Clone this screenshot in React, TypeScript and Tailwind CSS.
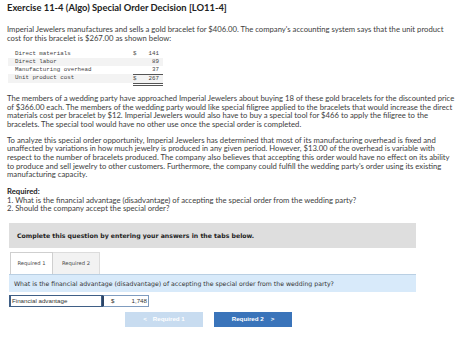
import React from "react";

const body = "font-['Lato','Liberation_Sans',sans-serif]";
const verdana = "font-['DejaVu_Sans','Liberation_Sans',sans-serif]";

const costRows = [
  { label: "Direct materials", sign: "$", value: "141", shade: false },
  { label: "Direct labor", sign: "", value: "89", shade: true },
  { label: "Manufacturing overhead", sign: "", value: "37", shade: false },
];

const Lines = ({ lines }: { lines: string[] }) => (
  <>
    {lines.map((l, i) => (
      <span key={i} className="block whitespace-nowrap">
        {l}
      </span>
    ))}
  </>
);

export default function App() {
  return (
    <div className={`w-[474px] h-[339px] overflow-hidden bg-white pl-[7px] text-[#3d3d3d] ${body}`}>
      <h1 className="pt-[2px] text-[9.4px] font-bold leading-[12px] text-[#222]">
        Exercise 11-4 (Algo) Special Order Decision [LO11-4]
      </h1>

      <p className="mt-[10.6px] text-[7.7px] leading-[9.3px]">
        <Lines
          lines={[
            "Imperial Jewelers manufactures and sells a gold bracelet for $406.00. The company's accounting system says that the unit product",
            "cost for this bracelet is $267.00 as shown below:",
          ]}
        />
      </p>

      <div className="mt-[6.8px] ml-[1px] w-[155px] font-['Liberation_Mono',monospace] text-[5.8px] text-[#444]">
        {costRows.map((r) => (
          <div
            key={r.label}
            className={`flex h-[8px] items-center ${r.shade ? "bg-[#f3f3f3]" : ""}`}
          >
            <span className="flex-1 pl-[7px]">{r.label}</span>
            <span className="flex w-[30px] justify-between pr-[4px]">
              <span>{r.sign}</span>
              <span>{r.value}</span>
            </span>
          </div>
        ))}
        <div className="flex h-[9px] items-stretch bg-[#f3f3f3]">
          <span className="flex flex-1 items-center pl-[7px]">Unit product cost</span>
          <span className="flex w-[30px] items-center justify-between border-t border-[#555] pr-[4px]">
            <span>$</span>
            <span>267</span>
          </span>
        </div>
        <div className="ml-auto h-[3px] w-[30px] border-b-[3px] border-double border-[#555]" />
      </div>

      <p className="mt-[7.9px] text-[7.7px] leading-[8.8px]">
        <Lines
          lines={[
            "The members of a wedding party have approached Imperial Jewelers about buying 18 of these gold bracelets for the discounted price",
            "of $366.00 each. The members of the wedding party would like special filigree applied to the bracelets that would increase the direct",
            "materials cost per bracelet by $12. Imperial Jewelers would also have to buy a special tool for $466 to apply the filigree to the",
            "bracelets. The special tool would have no other use once the special order is completed.",
          ]}
        />
      </p>

      <p className="mt-[6.5px] text-[7.7px] leading-[8.7px]">
        <Lines
          lines={[
            "To analyze this special order opportunity, Imperial Jewelers has determined that most of its manufacturing overhead is fixed and",
            "unaffected by variations in how much jewelry is produced in any given period. However, $13.00 of the overhead is variable with",
            "respect to the number of bracelets produced. The company also believes that accepting this order would have no effect on its ability",
            "to produce and sell jewelry to other customers. Furthermore, the company could fulfill the wedding party's order using its existing",
            "manufacturing capacity.",
          ]}
        />
      </p>

      <div className="mt-[7.9px] text-[7.7px] leading-[8.7px]">
        <div className="font-bold text-[#222]">Required:</div>
        <div>1. What is the financial advantage (disadvantage) of accepting the special order from the wedding party?</div>
        <div>2. Should the company accept the special order?</div>
      </div>

      <div className={`mt-[9.6px] ml-[2px] flex h-[25.6px] w-[407px] items-center bg-[#dedede] pl-[8px] text-[6.2px] font-bold text-[#222] ${verdana}`}>
        Complete this question by entering your answers in the tabs below.
      </div>

      <div className={`ml-[2px] w-[407px] ${verdana}`}>
        <div className="mt-[3.7px] flex h-[22px] pl-[1px] text-[5.2px] text-[#444]">
          <div className="flex w-[43px] items-center justify-center border border-b-0 border-[#cfcfcf] bg-white">
            Required 1
          </div>
          <div className="flex w-[47px] items-center justify-center border border-l-0 border-b-0 border-[#dcdcdc] bg-[#f2f2f2]">
            Required 2
          </div>
        </div>
        <div className="flex h-[18px] items-center border-t border-[#b9cfe3] bg-[#d8eafa] pl-[5px] text-[6.2px] text-[#333]">
          What is the financial advantage (disadvantage) of accepting the special order from the wedding party?
        </div>
      </div>

      <div className="mt-[2.6px] ml-[2px] flex h-[12px] w-[140px] font-['Liberation_Sans',sans-serif] text-[6.2px] text-[#333]">
        <div className="flex w-[93px] items-center border border-l-2 border-[#3f5f86] pl-[1px]">
          Financial advantage
        </div>
        <div className="flex flex-1 items-center justify-between border border-l-2 border-l-[#2a4466] border-[#7f9cbf] pl-[7px] pr-[1px]">
          <span>$</span>
          <span>1,748</span>
        </div>
      </div>

      <div className="mt-[5px] flex gap-[11px] pl-[118px] font-['Liberation_Sans',sans-serif] text-[6.2px] font-bold text-white">
        <div className="flex h-[15px] w-[78px] items-center justify-center gap-[6px] bg-[#c8dcf0]">
          <span>&lt;</span>
          <span>Required 1</span>
        </div>
        <div className="flex h-[15px] w-[78px] items-center justify-center gap-[7px] bg-[#3a74ba]">
          <span>Required 2</span>
          <span>&gt;</span>
        </div>
      </div>
    </div>
  );
}
